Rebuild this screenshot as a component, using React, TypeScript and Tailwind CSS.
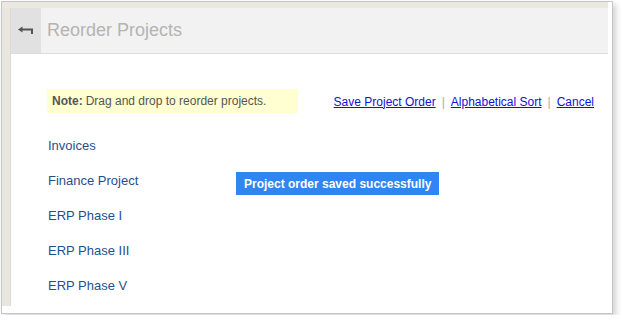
const projects = ["Invoices", "Finance Project", "ERP Phase I", "ERP Phase III", "ERP Phase V"]

function BackIcon() {
    return (
        <svg width="16" height="10" viewBox="0 0 16 10" className="text-[#555]">
            <path d="M0 3.5 L4.5 0.5 L4.5 6.5 Z" fill="currentColor" />
            <path d="M4 3.5 H14 V8" stroke="currentColor" strokeWidth="2" fill="none" />
        </svg>
    )
}

export default function App() {
    return (
        <div className="p-px font-['Liberation_Sans',Arial,sans-serif]">
            <div className="relative w-[612px] h-[313px] bg-white border border-[#c6c6c6] shadow-[3px_3px_6px_rgba(0,0,0,0.18)] overflow-hidden">
                {/* textured app background peeking around the panel */}
                <div className="h-[6px] w-[606px] bg-[#ebe8e1]" />
                <div className="flex items-start">
                    <div className="w-[9px] h-[298px] bg-[#e9e6df] border-r border-[#dcdad4]" />
                    <div className="w-[597px]">
                        {/* Header */}
                        <div className="flex h-[46px] bg-[#f2f2f2] border-b border-[#dddddd]">
                            <div className="w-[30px] bg-[#e1e1e1] flex items-center justify-center">
                                <BackIcon />
                            </div>
                            <div className="pl-[6px] flex items-center text-[18px] text-[#b4b4b4]">
                                Reorder Projects
                            </div>
                        </div>

                        {/* Body */}
                        <div className="relative pl-[36px] pr-[14px] pt-[35px]">
                            <div className="flex items-center justify-between text-[12px]">
                                <div className="w-[251px] h-[24px] bg-[#ffffd1] pl-[5px] flex items-center text-[#555]">
                                    <span className="font-bold mr-[3px]">Note:</span> Drag and drop to reorder projects.
                                </div>
                                <div className="flex items-center pt-[1px]">
                                    <a href="#" className="text-[#1010d8] underline">Save Project Order</a>
                                    <span className="text-[#aaa] px-[6px]">|</span>
                                    <a href="#" className="text-[#1010d8] underline">Alphabetical Sort</a>
                                    <span className="text-[#aaa] px-[6px]">|</span>
                                    <a href="#" className="text-[#1010d8] underline">Cancel</a>
                                </div>
                            </div>

                            <ul className="mt-[15px] pl-[1px]">
                                {projects.map(p => (
                                    <li key={p} className="h-[35px] flex items-center text-[13px] text-[#1f4f8f]">
                                        {p}
                                    </li>
                                ))}
                            </ul>

                            {/* toast */}
                            <div className="absolute left-[225px] top-[118px] h-[23px] px-[8px] flex items-center bg-[#2e86f2] text-white text-[12px] font-bold">
                                Project order saved successfully
                            </div>
                        </div>
                    </div>
                </div>
            </div>
        </div>
    )
}
